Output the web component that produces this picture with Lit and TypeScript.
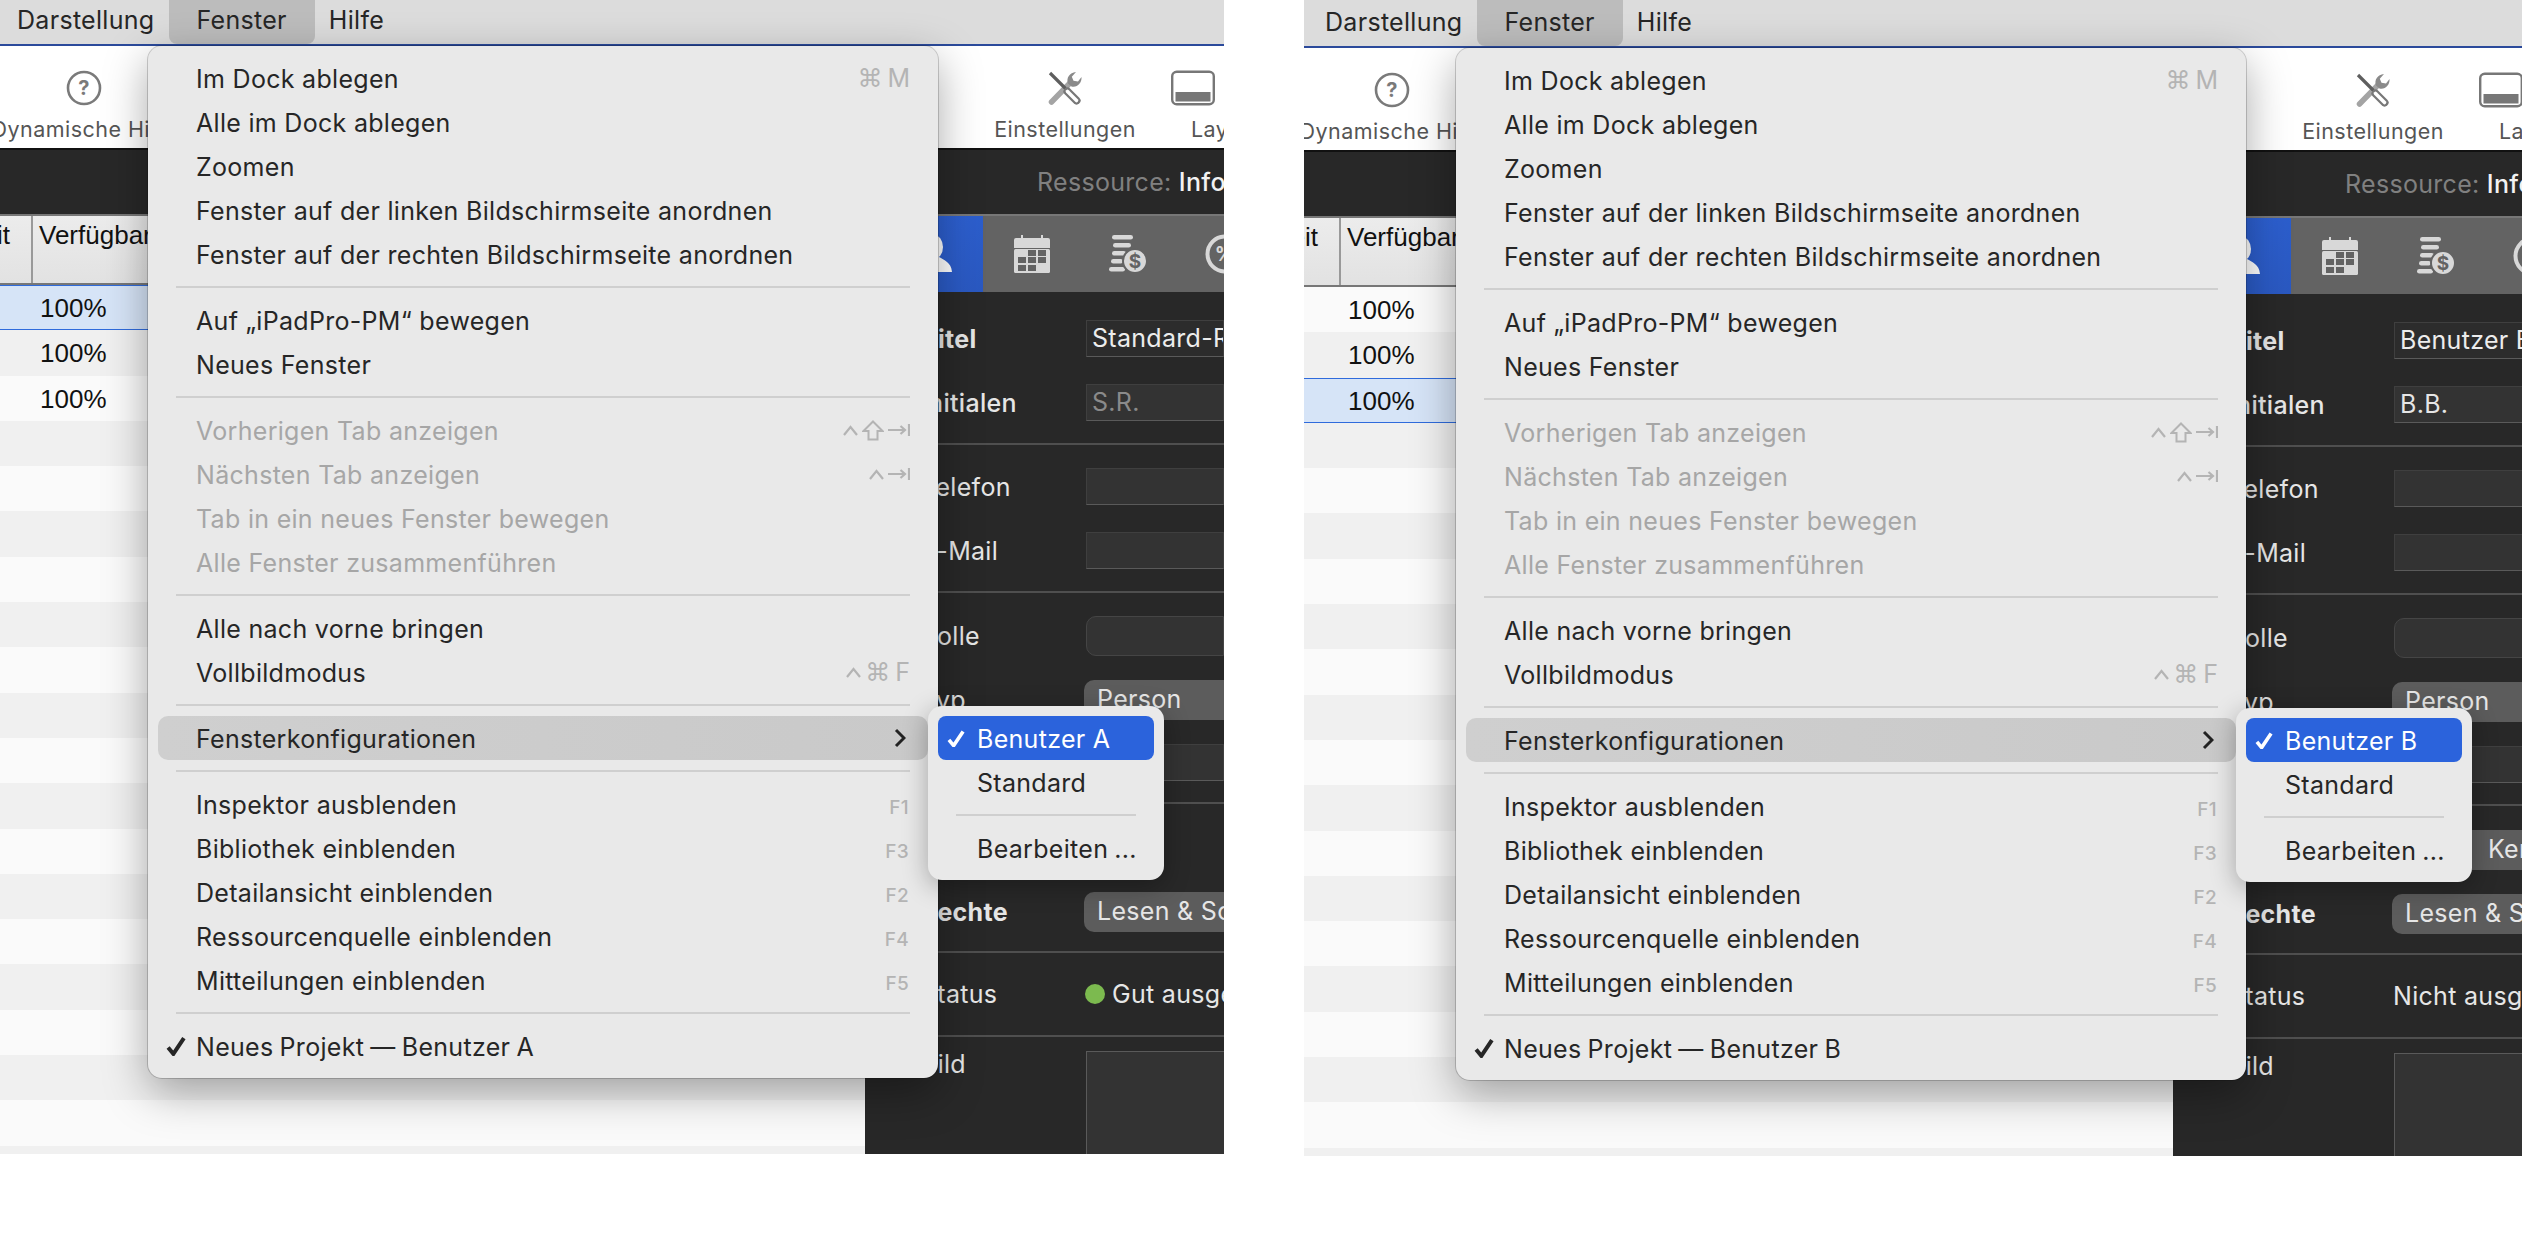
import { LitElement, html, css, svg } from "lit";
import { customElement, property } from "lit/decorators.js";

const ctrl = html`<svg class="k" width="15" height="11" viewBox="0 0 15 11"><path d="M1 10 7.5 2 14 10" fill="none" stroke="currentColor" stroke-width="2.2"/></svg>`;
const shift = html`<svg class="k" width="22" height="21" viewBox="0 0 22 21"><path d="M11 1.5 20.5 11H15.5V19.5H6.5V11H1.5Z" fill="none" stroke="currentColor" stroke-width="2"/></svg>`;
const tab = html`<svg class="k" width="22" height="12" viewBox="0 0 22 12"><path d="M0 6H17M12.5 2 17 6 12.5 10M21 0V12" fill="none" stroke="currentColor" stroke-width="2.2"/></svg>`;
const check = (w: number, h: number) => html`<svg width=${w} height=${h} viewBox="0 0 19 18"><path d="M2 10.5 7 16.5 17 1.5" fill="none" stroke="currentColor" stroke-width="3.8"/></svg>`;

type Item = { t?: string; off?: boolean; sc?: unknown; f?: string; sep?: boolean; hl?: boolean };

const cmd = (tail: string) => html`<span class="glyph">⌘</span><span class="letter">${tail}</span>`;

const items: Item[] = [
  { t: "Im Dock ablegen", sc: cmd("M") },
  { t: "Alle im Dock ablegen" },
  { t: "Zoomen" },
  { t: "Fenster auf der linken Bildschirmseite anordnen" },
  { t: "Fenster auf der rechten Bildschirmseite anordnen" },
  { sep: true },
  { t: "Auf „iPadPro-PM“ bewegen" },
  { t: "Neues Fenster" },
  { sep: true },
  { t: "Vorherigen Tab anzeigen", off: true, sc: html`${ctrl}${shift}${tab}` },
  { t: "Nächsten Tab anzeigen", off: true, sc: html`${ctrl}${tab}` },
  { t: "Tab in ein neues Fenster bewegen", off: true },
  { t: "Alle Fenster zusammenführen", off: true },
  { sep: true },
  { t: "Alle nach vorne bringen" },
  { t: "Vollbildmodus", sc: html`${ctrl}${cmd("F")}` },
  { sep: true },
  { t: "Fensterkonfigurationen", hl: true },
  { sep: true },
  { t: "Inspektor ausblenden", f: "F1" },
  { t: "Bibliothek einblenden", f: "F3" },
  { t: "Detailansicht einblenden", f: "F2" },
  { t: "Ressourcenquelle einblenden", f: "F4" },
  { t: "Mitteilungen einblenden", f: "F5" },
  { sep: true },
];

const helpIcon = html`<svg width="36" height="36" viewBox="0 0 36 36"><circle cx="18" cy="18" r="16" fill="none" stroke="#7a7a7a" stroke-width="2.6"/><text x="18" y="25" text-anchor="middle" font-family="Inter" font-weight="700" font-size="20" fill="#7a7a7a">?</text></svg>`;
const toolsIcon = html`<svg width="34" height="36" viewBox="0 0 34 36">
  <path d="M3.5 32 22 13" stroke="#a4a4a4" stroke-width="5.5" stroke-linecap="round"/>
  <path d="M20 13.5C18 8 21.5 2.5 28 2L23.8 6.8 25.5 10.8 30 11.5 33.5 7C34 13 29 18 23.5 16.5Z" fill="#8a8a8a"/>
  <path d="M2 3 17.5 18.5" stroke="#5e5e5e" stroke-width="3.2"/>
  <path d="M19.5 21.5 28.5 30.5" stroke="#777" stroke-width="8" stroke-linecap="round"/>
  <path d="M19.5 21.5 28.5 30.5" stroke="#fff" stroke-width="3.6" stroke-linecap="round"/>
</svg>`;
const layoutIcon = html`<svg width="44" height="35" viewBox="0 0 44 35"><rect x="1.2" y="1.2" width="41.6" height="32.6" rx="4.5" fill="#fff" stroke="#777" stroke-width="2.4"/><rect x="4.5" y="21.5" width="35" height="9.5" fill="#777"/></svg>`;
const userIcon = html`<svg width="40" height="38" viewBox="0 0 40 38"><ellipse cx="20" cy="12" rx="9" ry="12" fill="#fff"/><path d="M2 37C3 27 10 25 15 22H25C30 25 37 27 38 37Z" fill="#fff"/></svg>`;
const calIcon = html`<svg width="36" height="38" viewBox="0 0 36 38"><path d="M0 5a2 2 0 0 1 2-2H7V0H9V5h0V3H27V0H29V3H34a2 2 0 0 1 2 2V13H0Z" fill="#d8d8d8"/><rect y="14" width="36" height="24" rx="1.5" fill="#d8d8d8"/>
  ${[[14,15],[24,15],[4,22],[14,22],[24,22],[4,30],[14,30]].map(([x, y]) => svg`<rect x=${x} y=${y} width="8" height="6" fill="#636363"/>`)}</svg>`;
const coinIcon = html`<svg width="38" height="38" viewBox="0 0 38 38">
  ${[[3,0,21],[4,8,18],[3,16,14],[2,24,12],[0,32,16]].map(([x, y, w]) => svg`<rect x=${x} y=${y} width=${w} height="4.6" rx="2.3" fill="#d8d8d8"/>`)}
  <circle cx="26" cy="26" r="12" fill="#d8d8d8" stroke="#636363" stroke-width="2"/>
  <text x="26" y="33" text-anchor="middle" font-family="Inter" font-weight="700" font-size="19" fill="#636363">$</text></svg>`;
const pctIcon = html`<svg width="40" height="40" viewBox="0 0 40 40"><circle cx="20" cy="20" r="17.5" fill="none" stroke="#d8d8d8" stroke-width="4"/><text x="20" y="27" text-anchor="middle" font-family="Inter" font-weight="700" font-size="20" fill="#d8d8d8">%</text></svg>`;

@customElement("app-window")
export class AppWindow extends LitElement {
  @property() user = "A";
  static styles = css`
    :host { display: block; overflow: hidden; height: 1154px; width: 1224px; flex: none; background: #fff; font-family: Inter, "DejaVu Sans", sans-serif; font-size: 25px; letter-spacing: 0.3px; }
    :host([user="B"]) { width: 1218px; height: 1156px; margin-left: 80px; }
    .inner { position: relative; width: 1228px; height: 1156px; margin: -2px 0 0 -4px; display: flex; flex-direction: column; }
    :host([user="B"]) .inner { margin: 0; }
    .bar { height: 46px; flex: none; background: #dcdcdc; border-bottom: 2px solid #2b4a9b; display: flex; gap: 14px; padding-left: 21px; color: #262626; line-height: 44px; }
    .bar .on { padding: 0 28px; background: #bcbcbc; border-radius: 0 0 8px 8px; }
    .toolbar { height: 102px; flex: none; background: #fff; border-bottom: 2px solid #111; display: grid; grid-template-columns: 180px 801px 180px 1fr; margin-left: -2px; width: 1230px; font-size: 21.5px; letter-spacing: 0.45px; color: #555; }
    .tool { display: flex; flex-direction: column; align-items: center; white-space: nowrap; padding-top: 24px; }
    .tool svg { height: 36px; }
    .tool span { margin-top: 10px; }
    .tool.first { grid-column: 1; }
    .tool.second { grid-column: 3; }
    .tool.third { grid-column: 4; align-items: flex-start; padding-left: 16px; }
    .tool.third span { margin-left: 20px; }
    .strip { height: 64px; flex: none; background: #282828; color: #808080; padding-left: 1041px; line-height: 64px; white-space: nowrap; }
    .strip b { color: #f2f2f2; font-weight: 500; }
    .main { flex: 1; display: grid; grid-template-columns: 869px 359px; min-height: 0; }
    .table { overflow: hidden; background: #fff; font-family: "Liberation Sans", sans-serif; font-size: 26px; letter-spacing: 0; color: #111; }
    .head { height: 71px; background: linear-gradient(#ececec, #e2e2e2); border-top: 2px solid #777; border-bottom: 2px solid #777; display: flex; box-sizing: border-box; }
    .hc { width: 35px; border-right: 2px solid #999; display: flex; justify-content: flex-end; padding-top: 4px; overflow: hidden; box-sizing: content-box; white-space: nowrap; }
    .hc span { padding-right: 21px; }
    .hv { padding: 4px 0 0 6px; }
    .r { height: 45.3px; box-sizing: border-box; padding-left: 44px; line-height: 47px; background: #fafafa; }
    .r.odd { background: #f0f0f0; }
    .r.sel { background: #d6e4f7; border-top: 1.5px solid #2f6bdc; border-bottom: 1.5px solid #2f6bdc; line-height: 44px; }
    .insp { background: #282828; overflow: hidden; color: #e6e6e6; padding: 0; }
    .tabs { height: 78px; background: #636363; border-top: 2px solid #777; box-sizing: border-box; display: flex; align-items: center; }
    .tabs .act { width: 118px; height: 100%; background: linear-gradient(135deg, #2f66de, #2a58c0); display: flex; align-items: center; justify-content: center; padding-left: 20px; box-sizing: border-box; flex: none; }
    .tabs .tb { width: 96.5px; flex: none; display: flex; justify-content: center; padding-left: 1px; box-sizing: border-box; }
    .form { padding-left: 56px; }
    .f { display: grid; grid-template-columns: 165px 1fr; align-items: center; white-space: nowrap; }
    .f > label { line-height: 30px; }
    .bold { font-weight: 700; }
    .semi { font-weight: 500; }
    .val { height: 37px; box-sizing: border-box; background: #333; border: 1.5px solid #3f3f3f; border-bottom-color: #5a5a5a; padding-left: 5px; line-height: 34px; overflow: hidden; }
    .val.t { background: #2c2c2c; color: #ececec; }
    .dim { color: #8a8a8a; }
    .pill { height: 40px; margin-left: -2px; box-sizing: border-box; border-radius: 10px 0 0 10px; background: #5c5c5c; padding-left: 13px; line-height: 38px; overflow: hidden; color: #e6e6e6; }
    .pill.emp { background: #333; border: 1.5px solid #454545; margin-left: 0; }
    .pill.far { padding-left: 96px; }
    .blank { height: 40px; }
    .rule { height: 2px; background: #4f4f4f; }
    .status { height: 82px; }
    .statusv { display: flex; align-items: center; gap: 7px; margin-left: -1px; }
    .dot { width: 20px; height: 20px; border-radius: 50%; background: #7cba4f; }
    .pic { height: 140px; background: #333; border: 1.5px solid #5a5a5a; border-right: 0; margin-top: 14px; box-sizing: border-box; }
    .bild { align-items: start; }
    .bild label { padding-top: 12px; }
    .m19 { margin-top: 19px; } .m21 { margin-top: 21px; } .m22 { margin-top: 22px; } .m23 { margin-top: 23px; } .m24 { margin-top: 24px; } .m27 { margin-top: 27px; } .m28 { margin-top: 28px; }
    .menu { position: absolute; left: 152px; top: 48px; width: 790px; box-sizing: border-box; padding: 10px; background: #e9e9e9; border-radius: 14px; color: #262626; box-shadow: 0 0 0 1px rgba(0,0,0,.18), 0 14px 44px rgba(0,0,0,.34); }
    .row { height: 44px; display: grid; grid-template-columns: 38px 1fr auto; align-items: center; padding-right: 18px; border-radius: 10px; white-space: nowrap; }
    .tx { padding-top: 2px; }
    .tight { word-spacing: -1.2px; }
    .row.off { color: #a6a6a6; }
    .row.hl { background: linear-gradient(90deg, #cfcfcf, #c9c9c9); }
    .ck { padding-left: 8px; display: flex; }
    .sc { display: flex; align-items: center; gap: 4px; color: #b4b4b4; font-size: 25px; line-height: 1; letter-spacing: 0; }
    .glyph { font-family: "DejaVu Sans", sans-serif; font-size: 25px; }
    .letter { font-size: 25px; margin-left: 1px; }
    .fk { font-size: 19px; font-weight: 500; color: #b4b4b4; padding-top: 6px; padding-right: 1px; }
    .chev { display: flex; margin-right: 4px; color: #222; }
    .sep { height: 22px; margin: 0 18px; display: flex; align-items: center; }
    .sep::after { content: ""; flex: 1; height: 2px; background: #cfcfcf; }
    .sub { position: absolute; left: 780px; top: 660px; width: 236px; box-sizing: border-box; padding: 10px; background: #e9e9e9; border-radius: 14px; box-shadow: 0 6px 26px rgba(0,0,0,.3); }
    .sub .row { grid-template-columns: 39px 1fr; padding: 0; border-radius: 8px; }
    .sub .row.sel { background: #2b63dc; color: #fff; }
  `;

  private form(u: string) {
    const a = u === "A";
    return html`<div class="form">
      <div class="f m28"><label class="bold">Titel</label><div class="val t">${a ? "Standard-Ressource" : "Benutzer B"}</div></div>
      <div class="f m27"><label class="semi">Initialen</label><div class="val ${a ? "dim" : ""}">${a ? "S.R." : "B.B."}</div></div>
      <div class="rule m22"></div>
      <div class="f m23"><label>Telefon</label><div class="val"></div></div>
      <div class="f m27"><label>E-Mail</label><div class="val"></div></div>
      <div class="rule m22"></div>
      <div class="f m23"><label>Rolle</label><div class="pill emp"></div></div>
      <div class="f m24"><label>Typ</label><div class="pill">Person</div></div>
      <div class="f m24"><label></label><div class="val"></div></div>
      <div class="rule m21"></div>
      <div class="f m24"><label></label>${a ? html`<div class="blank"></div>` : html`<div class="pill far">Kernzeit</div>`}</div>
      <div class="f m24"><label class="bold">Rechte</label><div class="pill">Lesen &amp; Schreiben</div></div>
      <div class="rule m19"></div>
      <div class="f status"><label>Status</label><div class="statusv">${a ? html`<span class="dot"></span>Gut ausgelastet` : "Nicht ausgelastet"}</div></div>
      <div class="rule"></div>
      <div class="f bild"><label>Bild</label><div class="pic"></div></div>
    </div>`;
  }

  render() {
    const u = this.user;
    const selIdx = u === "A" ? 0 : 2;
    return html`<div class="inner">
      <div class="bar"><span>Darstellung</span><span class="on">Fenster</span><span>Hilfe</span></div>
      <div class="toolbar">
        <div class="tool first">${helpIcon}<span>Dynamische Hilfe</span></div>
        <div class="tool second">${toolsIcon}<span>Einstellungen</span></div>
        <div class="tool third">${layoutIcon}<span>Layout</span></div>
      </div>
      <div class="strip">Ressource: <b>Informationen</b></div>
      <div class="main">
        <div class="table">
          <div class="head"><div class="hc"><span>Arbeitszeit</span></div><div class="hv">Verfügbar</div></div>
          ${Array.from({ length: 20 }, (_, i) => html`<div class="r ${i % 2 ? "odd" : ""} ${i === selIdx ? "sel" : ""}">${i < 3 ? "100%" : ""}</div>`)}
        </div>
        <div class="insp">
          <div class="tabs">
            <div class="act">${userIcon}</div>
            <div class="tb">${calIcon}</div>
            <div class="tb">${coinIcon}</div>
            <div class="tb">${pctIcon}</div>
          </div>
          ${this.form(u)}
        </div>
      </div>
      <div class="menu">
        ${items.map((it) => it.sep ? html`<div class="sep"></div>` : html`
          <div class="row ${it.off ? "off" : ""} ${it.hl ? "hl" : ""}">
            <span></span><span class="tx">${it.t}</span>
            ${it.sc ? html`<span class="sc">${it.sc}</span>` : it.f ? html`<span class="fk">${it.f}</span>` : it.hl ? html`<span class="chev"><svg width="12" height="20" viewBox="0 0 12 20"><path d="M2 2 10 10 2 18" fill="none" stroke="currentColor" stroke-width="3"/></svg></span>` : ""}
          </div>`)}
        <div class="row"><span class="ck">${check(20, 20)}</span><span class="tx tight">Neues Projekt — Benutzer ${u}</span></div>
        <div class="sub">
          <div class="row sel"><span class="ck">${check(20, 17)}</span><span class="tx">Benutzer ${u}</span></div>
          <div class="row"><span></span><span class="tx">Standard</span></div>
          <div class="sep"></div>
          <div class="row"><span></span><span class="tx tight">Bearbeiten ...</span></div>
        </div>
      </div>
    </div>`;
  }
}

@customElement("app-root")
export class AppRoot extends LitElement {
  static styles = css`
    :host { display: flex; width: 2522px; height: 1260px; background: #fff; overflow: hidden; align-items: flex-start; }
  `;
  render() {
    return html`<app-window user="A"></app-window><app-window user="B"></app-window>`;
  }
}
